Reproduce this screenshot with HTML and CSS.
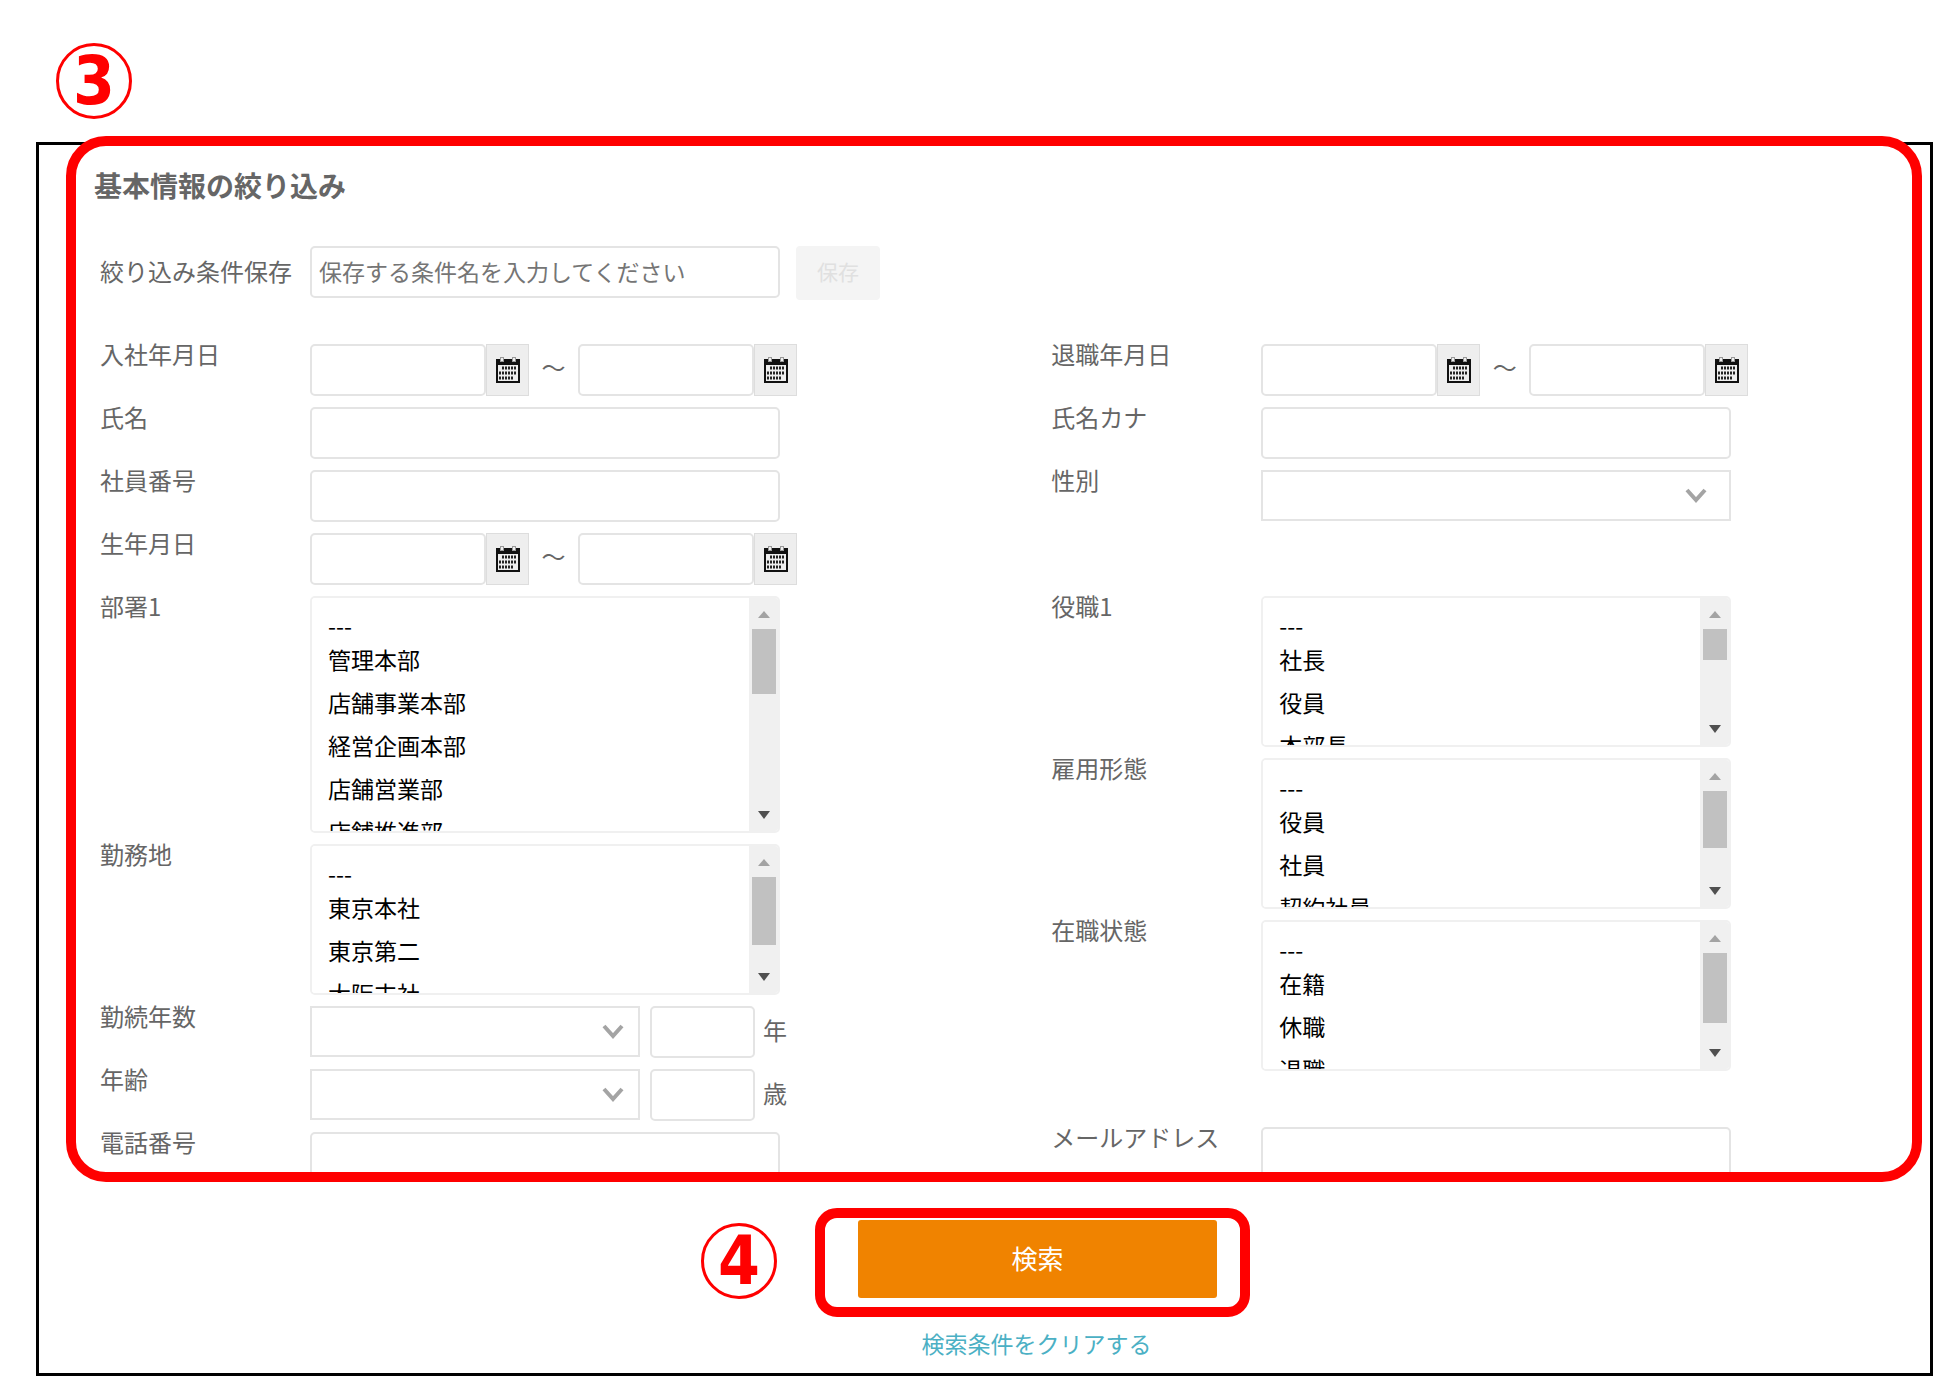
FILE: index.html
```html
<!DOCTYPE html>
<html lang="ja">
<head>
<meta charset="utf-8">
<title>基本情報の絞り込み</title>
<link rel="stylesheet" href="styles.css">
</head>
<body>
<svg class="defs" aria-hidden="true">
  <symbol id="calendar" viewBox="0 0 24 26">
    <path fill="#111" d="M0 2h24v24H0z"/>
    <path fill="#eee" d="M2 8h20v16H2z"/>
    <path fill="#999" d="M4 0h4v5H4zM16 0h4v5h-4z"/>
    <path fill="#eee" d="M5 1h2v3H5zM17 1h2v3h-2z"/>
    <path stroke="#222" stroke-width="3" stroke-dasharray="2 1" fill="none" d="M6 11h15M3 16h18M3 21h14"/>
  </symbol>
</svg>
<div class="page">
  <header class="step"><span class="badge">3</span></header>
  <form class="frame">
    <section class="panel">
      <h1 class="title">基本情報の絞り込み</h1>
      <div class="save">
        <label class="label" for="cond">絞り込み条件保存</label>
        <input class="box wide" id="cond" type="text" placeholder="保存する条件名を入力してください">
        <button class="save-button" type="button" disabled>保存</button>
      </div>
      <div class="columns">
        <div class="column">
          <div class="row">
            <label class="label" for="join">入社年月日</label>
            <input class="box date" id="join" type="text"><button class="cal" type="button" aria-label="カレンダー"><svg class="icon"><use href="#calendar"/></svg></button>
            <span class="tilde">～</span>
            <input class="box date" type="text" aria-label="入社年月日まで"><button class="cal" type="button" aria-label="カレンダー"><svg class="icon"><use href="#calendar"/></svg></button>
          </div>
          <div class="row">
            <label class="label" for="name">氏名</label>
            <input class="box wide" id="name" type="text">
          </div>
          <div class="row">
            <label class="label" for="number">社員番号</label>
            <input class="box wide" id="number" type="text">
          </div>
          <div class="row">
            <label class="label" for="birth">生年月日</label>
            <input class="box date" id="birth" type="text"><button class="cal" type="button" aria-label="カレンダー"><svg class="icon"><use href="#calendar"/></svg></button>
            <span class="tilde">～</span>
            <input class="box date" type="text" aria-label="生年月日まで"><button class="cal" type="button" aria-label="カレンダー"><svg class="icon"><use href="#calendar"/></svg></button>
          </div>
          <div class="row">
            <label class="label" for="dept">部署1</label>
            <div class="list tall">
              <select class="options" id="dept" multiple>
                <option>---</option><option>管理本部</option><option>店舗事業本部</option><option>経営企画本部</option><option>店舗営業部</option><option>店舗推進部</option>
              </select>
              <div class="bar"><i class="up"></i><i class="thumb" style="height:65px"></i><i class="down"></i></div>
            </div>
          </div>
          <div class="row">
            <label class="label" for="place">勤務地</label>
            <div class="list">
              <select class="options" id="place" multiple>
                <option>---</option><option>東京本社</option><option>東京第二</option><option>大阪支社</option>
              </select>
              <div class="bar"><i class="up"></i><i class="thumb" style="height:68px"></i><i class="down"></i></div>
            </div>
          </div>
          <div class="row">
            <label class="label" for="years">勤続年数</label>
            <select class="drop" id="years"><option></option></select>
            <input class="box small" type="text" aria-label="勤続年数">
            <span class="unit">年</span>
          </div>
          <div class="row">
            <label class="label" for="age">年齢</label>
            <select class="drop" id="age"><option></option></select>
            <input class="box small" type="text" aria-label="年齢">
            <span class="unit">歳</span>
          </div>
          <div class="row">
            <label class="label" for="tel">電話番号</label>
            <input class="box wide" id="tel" type="text">
          </div>
        </div>
        <div class="column">
          <div class="row">
            <label class="label" for="leave">退職年月日</label>
            <input class="box date" id="leave" type="text"><button class="cal" type="button" aria-label="カレンダー"><svg class="icon"><use href="#calendar"/></svg></button>
            <span class="tilde">～</span>
            <input class="box date" type="text" aria-label="退職年月日まで"><button class="cal" type="button" aria-label="カレンダー"><svg class="icon"><use href="#calendar"/></svg></button>
          </div>
          <div class="row">
            <label class="label" for="kana">氏名カナ</label>
            <input class="box wide" id="kana" type="text">
          </div>
          <div class="row">
            <label class="label" for="sex">性別</label>
            <select class="drop wide" id="sex"><option></option></select>
          </div>
          <div class="row"></div>
          <div class="row">
            <label class="label" for="post">役職1</label>
            <div class="list">
              <select class="options" id="post" multiple>
                <option>---</option><option>社長</option><option>役員</option><option>本部長</option>
              </select>
              <div class="bar"><i class="up"></i><i class="thumb" style="height:31px"></i><i class="down"></i></div>
            </div>
          </div>
          <div class="row">
            <label class="label" for="kind">雇用形態</label>
            <div class="list">
              <select class="options" id="kind" multiple>
                <option>---</option><option>役員</option><option>社員</option><option>契約社員</option>
              </select>
              <div class="bar"><i class="up"></i><i class="thumb" style="height:57px"></i><i class="down"></i></div>
            </div>
          </div>
          <div class="row last-list">
            <label class="label" for="status">在職状態</label>
            <div class="list">
              <select class="options" id="status" multiple>
                <option>---</option><option>在籍</option><option>休職</option><option>退職</option>
              </select>
              <div class="bar"><i class="up"></i><i class="thumb" style="height:70px"></i><i class="down"></i></div>
            </div>
          </div>
          <div class="row">
            <label class="label" for="mail">メールアドレス</label>
            <input class="box wide" id="mail" type="text">
          </div>
        </div>
      </div>
    </section>
    <footer class="actions">
      <span class="badge">4</span>
      <div class="ring"><button class="search" type="submit">検索</button></div>
      <a class="clear" href="#">検索条件をクリアする</a>
    </footer>
  </form>
</div>
</body>
</html>
```
FILE: styles.css
```css
* {
  box-sizing: border-box;
}

body {
  margin: 0;
  background: #fff;
  color: #666;
  font-family: "Noto Sans CJK JP", sans-serif;
  font-size: 24px;
  line-height: 24px;
}

input,
select,
button {
  margin: 0;
  font-family: inherit;
  font-size: 23px;
}

.defs {
  display: none;
}

.page {
  display: flex;
  flex-direction: column;
  height: 100vh;
  padding: 43px 0 1px 36px;
}

.step {
  display: flex;
  height: 99px;
  flex: none;
  padding-left: 20px;
}

.badge {
  display: flex;
  align-items: center;
  justify-content: center;
  width: 76px;
  height: 76px;
  border: 3px solid #f00;
  border-radius: 50%;
  color: #f00;
  font: bold 67px/67px "DejaVu Sans Condensed", "DejaVu Sans", sans-serif;
}

.frame {
  display: flex;
  flex: 1;
  flex-direction: column;
  min-height: 0;
  border: 3px solid #000;
}

.panel {
  flex: 1;
  min-height: 0;
  margin: -9px 8px 0 27px;
  padding: 24px 0 0 24px;
  overflow: hidden;
  border: 10px solid #f00;
  border-radius: 40px;
}

.title {
  margin: 0 0 46px -6px;
  font-size: 28px;
  line-height: 30px;
}

.save {
  display: flex;
  margin-bottom: 44px;
}

.save .label {
  line-height: 50px;
}

.save-button {
  width: 84px;
  height: 54px;
  margin-left: 16px;
  padding: 0 0 4px;
  border: 0;
  border-radius: 4px;
  background: #f4f4f4;
  color: #e0e0e0;
  font-size: 21px;
}

.columns {
  display: grid;
  grid-template-columns: 21fr 19fr;
}

.column {
  display: flex;
  flex-direction: column;
  gap: 11px;
}

.row {
  display: flex;
  min-height: 52px;
}

.label {
  flex: none;
  width: 210px;
  line-height: 20px;
}

.box {
  height: 52px;
  padding: 0 7px 3px;
  border: 2px solid #e4e4e4;
  border-radius: 5px;
  background: #fff;
  outline: 0;
}

.box::placeholder {
  color: #757575;
}

.box.date {
  width: 176px;
}

.box.small {
  width: 105px;
  margin-left: 10px;
}

.cal {
  display: flex;
  align-items: center;
  justify-content: center;
  width: 43px;
  height: 52px;
  padding: 0;
  border: 1px solid #ddd;
  background: #eee;
}

.icon {
  width: 24px;
  height: 26px;
}

.tilde {
  width: 49px;
  line-height: 46px;
  text-align: center;
}

.unit {
  margin-left: 8px;
  line-height: 48px;
}

.drop {
  width: 330px;
  height: 51px;
  appearance: none;
  border: 2px solid #e4e4e4;
  border-radius: 0;
  background: #fff url("data:image/svg+xml,%3Csvg xmlns='http://www.w3.org/2000/svg' width='22' height='16'%3E%3Cpath d='M2 2l9 10 9-10' fill='none' stroke='%23a4a4a4' stroke-width='4'/%3E%3C/svg%3E") no-repeat right 14px center;
}

.box.wide,
.drop.wide {
  width: 470px;
}

.drop.wide {
  background-position: right 22px center;
}

.list {
  display: flex;
  width: 470px;
  height: 151px;
  overflow: hidden;
  border: 2px solid #f0f0f0;
  border-radius: 5px;
}

.list.tall {
  height: 237px;
}

.options {
  flex: 1;
  height: 100%;
  padding: 10px 0 0;
  border: 0;
  outline: 0;
  background: #fff;
  color: #000;
  scrollbar-width: none;
}

.options option {
  min-height: 43px;
  padding: 0 16px;
  line-height: 43px;
}

.options option:first-child {
  min-height: 34px;
  line-height: 30px;
}

.bar {
  display: flex;
  flex-direction: column;
  align-items: center;
  width: 29px;
  padding: 13px 0 12px;
  background: #f0f0f0;
}

.up,
.down {
  border: 6px solid transparent;
}

.up {
  border-top: 0;
  border-bottom: 7px solid #a3a3a3;
}

.thumb {
  width: 24px;
  margin: 11px 0 auto;
  background: #c1c1c1;
}

.down {
  border-top: 8px solid #505050;
  border-bottom: 0;
}

.last-list {
  margin-bottom: 45px;
}

.actions {
  display: grid;
  grid-template-columns: 76px 435px;
  column-gap: 38px;
  justify-content: center;
  padding: 26px 18px 18px 0;
}

.actions .badge {
  margin-top: 15px;
}

.ring {
  padding: 2px 23px 9px 33px;
  border: 10px solid #f00;
  border-radius: 22px;
}

.search {
  display: block;
  width: 100%;
  height: 78px;
  padding: 0 0 4px;
  border: 0;
  border-radius: 3px;
  background: #f08300;
  color: #fff;
  font-size: 26px;
}

.clear {
  grid-column: 2;
  margin-top: 14px;
  padding-left: 8px;
  color: #4bb0c4;
  font-size: 23px;
  text-align: center;
  text-decoration: none;
}
```
